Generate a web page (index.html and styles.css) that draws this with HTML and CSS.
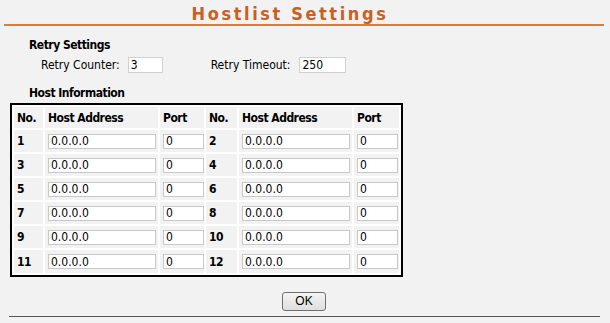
FILE: index.html
```html
<!DOCTYPE html>
<html lang="en">

<head>
    <meta charset="UTF-8">
    <title>Hostlist Settings</title>
    <link rel="stylesheet" href="styles.css">
</head>

<body>
    <div class="title">Hostlist Settings</div>
    <div class="title-line"></div>

    <div class="section">
        <div class="section-head">Retry Settings</div>
        <div class="retry-row">
            <label>Retry Counter:</label>
            <input type="text" class="retry-count" value="3">
            <label class="timeout-label">Retry Timeout:</label>
            <input type="text" class="retry-timeout" value="250">
        </div>
        <div class="section-head host-head">Host Information</div>
    </div>

    <table class="hosts">
        <tr>
            <th class="c-no">No.</th>
            <th class="c-addr">Host Address</th>
            <th class="c-port">Port</th>
            <th class="c-no2">No.</th>
            <th class="c-addr">Host Address</th>
            <th class="c-port2">Port</th>
        </tr>
        <tr>
            <td class="num">1</td><td><input type="text" class="addr" value="0.0.0.0"></td><td><input type="text" class="port" value="0"></td>
            <td class="num">2</td><td><input type="text" class="addr" value="0.0.0.0"></td><td><input type="text" class="port" value="0"></td>
        </tr>
        <tr>
            <td class="num">3</td><td><input type="text" class="addr" value="0.0.0.0"></td><td><input type="text" class="port" value="0"></td>
            <td class="num">4</td><td><input type="text" class="addr" value="0.0.0.0"></td><td><input type="text" class="port" value="0"></td>
        </tr>
        <tr>
            <td class="num">5</td><td><input type="text" class="addr" value="0.0.0.0"></td><td><input type="text" class="port" value="0"></td>
            <td class="num">6</td><td><input type="text" class="addr" value="0.0.0.0"></td><td><input type="text" class="port" value="0"></td>
        </tr>
        <tr>
            <td class="num">7</td><td><input type="text" class="addr" value="0.0.0.0"></td><td><input type="text" class="port" value="0"></td>
            <td class="num">8</td><td><input type="text" class="addr" value="0.0.0.0"></td><td><input type="text" class="port" value="0"></td>
        </tr>
        <tr>
            <td class="num">9</td><td><input type="text" class="addr" value="0.0.0.0"></td><td><input type="text" class="port" value="0"></td>
            <td class="num">10</td><td><input type="text" class="addr" value="0.0.0.0"></td><td><input type="text" class="port" value="0"></td>
        </tr>
        <tr>
            <td class="num">11</td><td><input type="text" class="addr" value="0.0.0.0"></td><td><input type="text" class="port" value="0"></td>
            <td class="num">12</td><td><input type="text" class="addr" value="0.0.0.0"></td><td><input type="text" class="port" value="0"></td>
        </tr>
    </table>

    <div class="buttons">
        <button type="button" class="ok">OK</button>
    </div>
    <div class="bottom-line"></div>
</body>
</html>
```

FILE: styles.css
```css
* {
    margin: 0;
    padding: 0;
}

body {
    background: #f2f2f2;
    font-family: "DejaVu Sans Condensed", "DejaVu Sans", sans-serif;
    font-size: 12px;
    color: #000;
}

.title {
    text-align: center;
    padding-right: 30px;
    padding-top: 3px;
    height: 21px;
    font-size: 18px;
    font-weight: bold;
    letter-spacing: 2.6px;
    color: #c8601e;
}

.title-line {
    height: 2px;
    margin: 0 6px 0 4px;
    background: #e07a2e;
}

.section {
    padding-left: 29px;
    padding-top: 12px;
}

.section-head {
    font-weight: bold;
    letter-spacing: -0.5px;
    height: 16px;
}

.retry-row {
    display: flex;
    align-items: center;
    padding-left: 12px;
    margin-top: 2px;
    height: 17px;
}

.retry-row input {
    height: 16px;
    border: 1px solid #d0d0d0;
    background: #fff;
    font-family: inherit;
    font-size: 12px;
    padding: 0 2px;
    box-sizing: border-box;
}

.retry-count {
    width: 35px;
    margin-left: 8px;
}

.timeout-label {
    margin-left: 48px;
}

.retry-timeout {
    width: 47px;
    margin-left: 9px;
}

.host-head {
    margin-top: 13px;
}

.hosts {
    margin: 1px 0 0 10px;
    border: 2px solid #000;
    border-spacing: 2px;
    background: #fff;
}

.hosts th,
.hosts td {
    background: #f2f2f2;
    height: 22.1px;
    padding: 0 0 0 3px;
    text-align: left;
    font-weight: bold;
    letter-spacing: -0.5px;
    vertical-align: middle;
}

.hosts th {
    height: 21px;
}

.c-no { width: 26px; }
.c-addr { width: 110px; }
.c-port { width: 40px; }
.c-no2 { width: 28px; }
.c-port2 { width: 42px; }

.hosts input {
    display: block;
    height: 15px;
    border: 1px solid #c8c8c8;
    background: #fff;
    font-family: inherit;
    font-size: 12px;
    letter-spacing: 0;
    padding: 0 2px;
    box-sizing: border-box;
}

.hosts .addr {
    width: 108px;
}

.hosts .port {
    width: 41px;
}

.buttons {
    margin-top: 15px;
    padding-left: 282px;
    height: 20px;
}

.ok {
    width: 44px;
    height: 19px;
    border: 1px solid #707070;
    border-radius: 3px;
    background: linear-gradient(#f4f4f4, #dedede);
    font-family: "Liberation Sans", sans-serif;
    font-size: 12px;
}

.bottom-line {
    margin: 4px 10px 0 9px;
    height: 1px;
    border-top: 1px solid #555;
}
```
